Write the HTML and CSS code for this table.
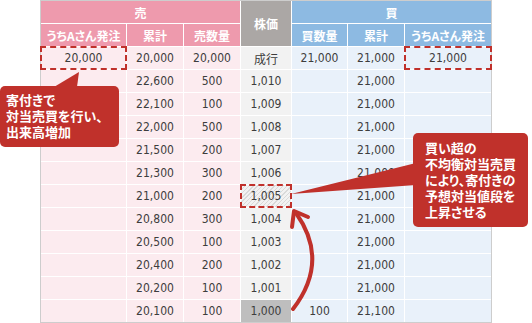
FILE: index.html
```html
<!DOCTYPE html>
<html lang="ja">
<head>
<meta charset="utf-8">
<link rel="stylesheet" href="styles.css">
</head>
<body>
<div class="page">
  <div class="board">
    <div class="h hs span3">売</div>
    <div class="h hp rows2">株価</div>
    <div class="h hb span3">買</div>
    <div class="h hs">うちAさん発注</div>
    <div class="h hs">累計</div>
    <div class="h hs">売数量</div>
    <div class="h hb">買数量</div>
    <div class="h hb">累計</div>
    <div class="h hb">うちAさん発注</div>

    <div class="c s mark">20,000</div><div class="c s">20,000</div><div class="c s">20,000</div><div class="c p">成行</div><div class="c b">21,000</div><div class="c b">21,000</div><div class="c b mark">21,000</div>
    <div class="c s"></div><div class="c s">22,600</div><div class="c s">500</div><div class="c p">1,010</div><div class="c b"></div><div class="c b">21,000</div><div class="c b"></div>
    <div class="c s"></div><div class="c s">22,100</div><div class="c s">100</div><div class="c p">1,009</div><div class="c b"></div><div class="c b">21,000</div><div class="c b"></div>
    <div class="c s"></div><div class="c s">22,000</div><div class="c s">500</div><div class="c p">1,008</div><div class="c b"></div><div class="c b">21,000</div><div class="c b"></div>
    <div class="c s"></div><div class="c s">21,500</div><div class="c s">200</div><div class="c p">1,007</div><div class="c b"></div><div class="c b">21,000</div><div class="c b"></div>
    <div class="c s"></div><div class="c s">21,300</div><div class="c s">300</div><div class="c p">1,006</div><div class="c b"></div><div class="c b">21,000</div><div class="c b"></div>
    <div class="c s"></div><div class="c s">21,000</div><div class="c s">200</div><div class="c p hatch mark">1,005</div><div class="c b"></div><div class="c b">21,000</div><div class="c b"></div>
    <div class="c s"></div><div class="c s">20,800</div><div class="c s">300</div><div class="c p">1,004</div><div class="c b"></div><div class="c b">21,000</div><div class="c b"></div>
    <div class="c s"></div><div class="c s">20,500</div><div class="c s">100</div><div class="c p">1,003</div><div class="c b"></div><div class="c b">21,000</div><div class="c b"></div>
    <div class="c s"></div><div class="c s">20,400</div><div class="c s">200</div><div class="c p">1,002</div><div class="c b"></div><div class="c b">21,000</div><div class="c b"></div>
    <div class="c s"></div><div class="c s">20,200</div><div class="c s">100</div><div class="c p">1,001</div><div class="c b"></div><div class="c b">21,000</div><div class="c b"></div>
    <div class="c s"></div><div class="c s">20,100</div><div class="c s">100</div><div class="c p dark">1,000</div><div class="c b">100</div><div class="c b">21,100</div><div class="c b"></div>
  </div>

  <svg class="overlay" width="532" height="323" viewBox="0 0 532 323">
    <polygon class="red" points="54,87 77,87 79,72"/>
    <polygon class="red" points="291,194 416,163 416,185"/>
    <path class="stroke" d="M293,309 Q330,261 296,213"/>
    <polyline class="stroke" points="292,227 294,211 308,217"/>
  </svg>

  <div class="callout c1">寄付きで<br>対当売買を行い、<br>出来高増加</div>
  <div class="callout c2">買い超の<br>不均衡対当売買<br>により、寄付きの<br>予想対当値段を<br>上昇させる</div>
</div>
</body>
</html>
```

FILE: styles.css
```css
* { box-sizing: border-box; }
html, body { margin: 0; padding: 0; background: #fff; }
.page {
  position: relative;
  width: 532px;
  height: 323px;
  overflow: hidden;
}
.board {
  margin-left: 40px;
  width: max-content;
  display: grid;
  grid-template-columns: 85px 56px 56px 50px 55px 56px 86px;
  grid-auto-rows: 22px;
  gap: 1px;
  background: #fff;
  border: 1px solid #cdcdcd;
}
.h {
  display: flex;
  align-items: center;
  justify-content: center;
  color: #fff;
  font-family: "Noto Sans CJK JP", sans-serif;
  font-weight: 700;
  font-size: 12px;
  font-feature-settings: "palt";
}
.hs { background: #ee9aad; }
.hb { background: #8dbae2; }
.hp { background: #aba7a5; }
.span3 { grid-column: span 3; }
.rows2 { grid-row: span 2; }
.c {
  display: flex;
  align-items: center;
  justify-content: center;
  color: #3d3d3d;
  font-family: "DejaVu Sans Condensed", "DejaVu Sans", "Noto Sans CJK JP", sans-serif;
  font-size: 12px;
}
.c.p { font-family: "DejaVu Sans Condensed", "Noto Sans CJK JP", sans-serif; }
.s { background: #fcebef; }
.b { background: #e9f1fa; }
.p { background: #f2f2f2; }
.dark { background: #bebebe; }
.hatch {
  background: repeating-linear-gradient(-45deg, #f2f2f2 0 2px, #d9d9d9 2px 3px);
}
.mark {
  outline: 2px dashed #c0312b;
  outline-offset: -1px;
}
.overlay {
  position: absolute;
  left: 0;
  top: 0;
}
.red { fill: #c0312b; }
.stroke {
  fill: none;
  stroke: #c0312b;
  stroke-width: 4;
  stroke-linecap: round;
  stroke-linejoin: round;
}
.callout {
  position: absolute;
  background: #c0312b;
  color: #fff;
  border-radius: 5px;
  font-family: "Noto Sans CJK JP", sans-serif;
  font-weight: 700;
  font-size: 13px;
  line-height: 16px;
  font-feature-settings: "palt";
  white-space: nowrap;
}
.c1 {
  left: 0;
  top: 86px;
  width: 119px;
  height: 61px;
  padding: 6px 0 0 6px;
}
.c2 {
  left: 413px;
  top: 133px;
  width: 115px;
  height: 94px;
  padding: 7px 0 0 12px;
}
```
